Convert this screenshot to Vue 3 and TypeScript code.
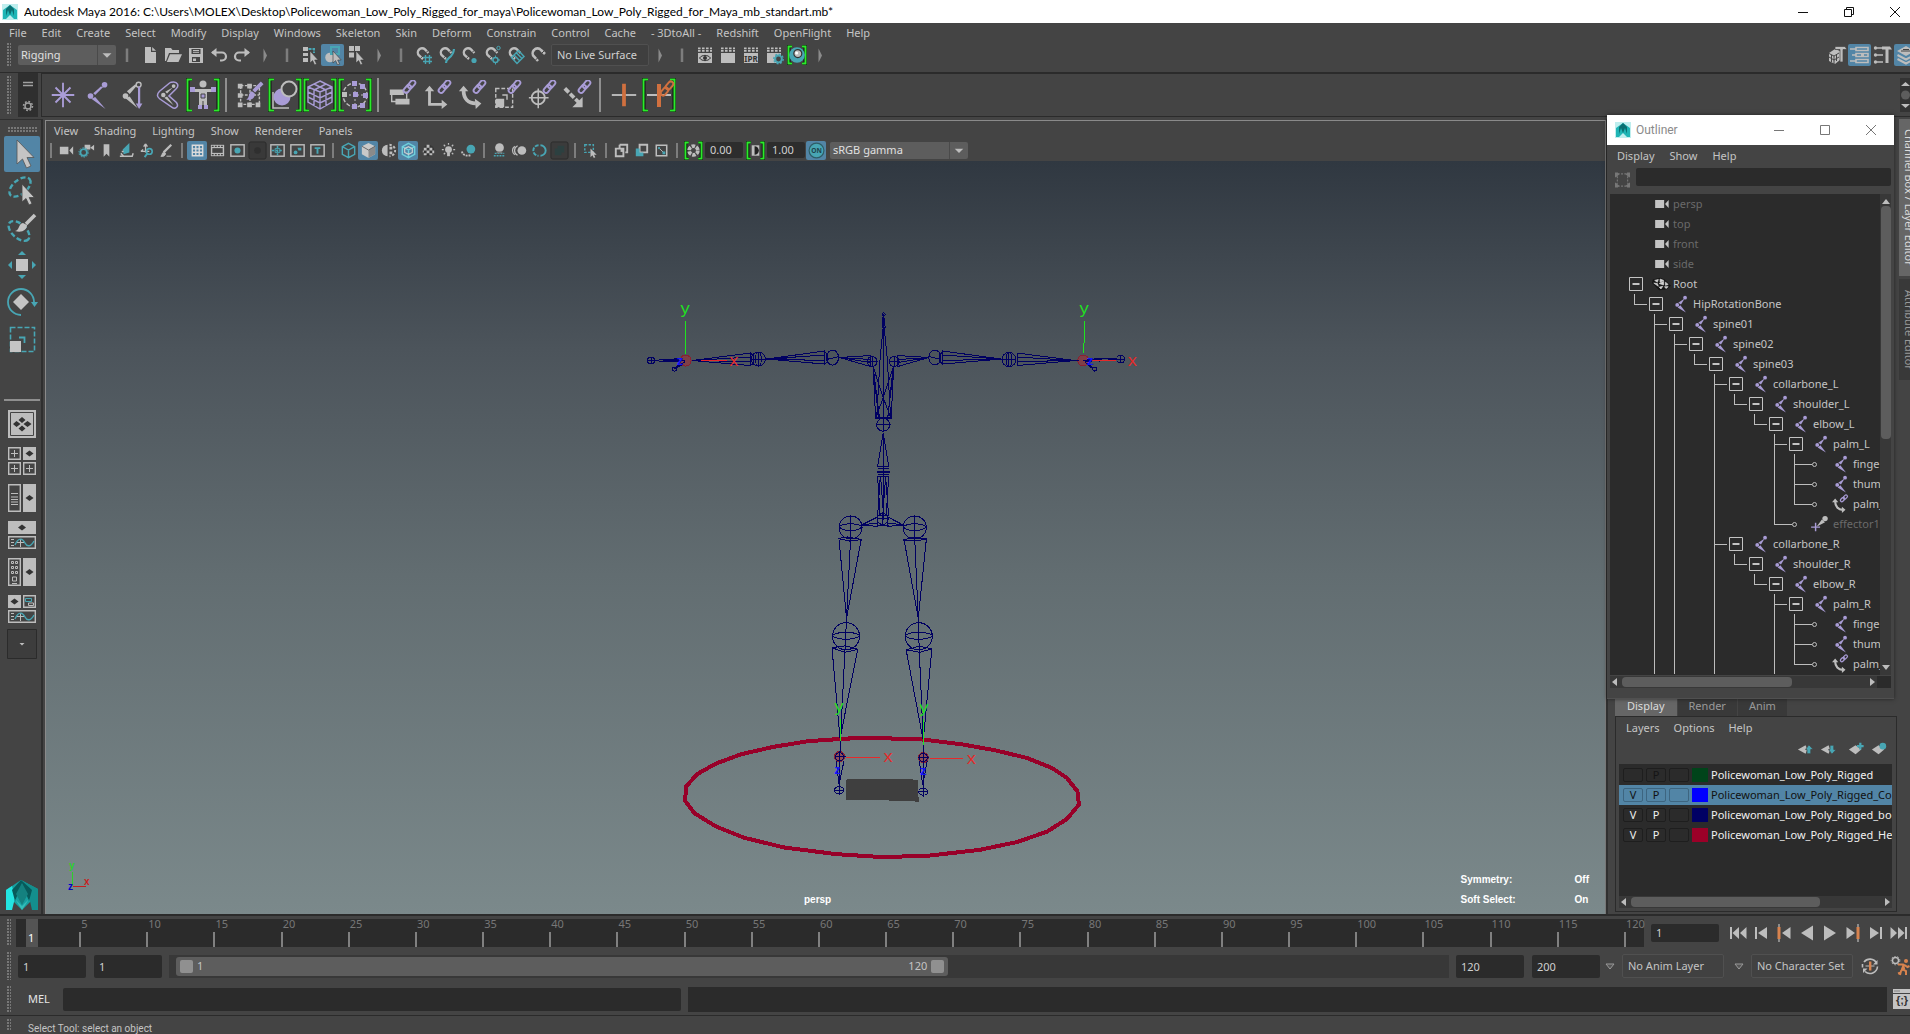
<script setup lang="ts">
import { ref } from 'vue'

const G = '#bdbdbd'
const T = '#48a6b4'
const P = '#a99cd6'
const O = '#d0703f'
const D = '#333333'

const cursor = `<path d="M10 6V18L12.6 15.6L14.6 20L16.6 19.1L14.7 15H18.2Z" fill="${G}" stroke="#3a3a3a" stroke-width=".6"/>`
const magnet = `<path d="M9 14L5 10.4A4.2 4.2 0 0 1 5 4.6A4.2 4.2 0 0 1 11 4.4L14.4 8" fill="none" stroke="${G}" stroke-width="2.4"/><path d="M6.400 13.400l2.600-2.600M12 7.600l2.200-2.200" stroke="#444" stroke-width="1"/>`
const clapper = `<path d="M3 8h14v10H3z" fill="${G}"/><path d="M3 3.4h14M3 5.9h14" stroke="${G}" stroke-width="1.6" stroke-dasharray="2.6 1.4"/>`
const chain = `<g fill="none" stroke="${P}" stroke-width="2"><rect x="17" y="7" width="9.500" height="5.200" rx="2.600" transform="rotate(-50 21.700 9.600)"/><rect x="21.500" y="2" width="9.500" height="5.200" rx="2.600" transform="rotate(-50 26.200 4.600)"/></g>`
const brace = (w: number, h: number, c = 5) =>
  `<path d="M${c} 1H1.500V${h - 1}H${c}M${w - c} 1H${w - 1.5}V${h - 1}H${w - c}" fill="none" stroke="#111" stroke-width="4"/><path d="M${c} 1.500H1.500V${h - 1.5}H${c}M${w - c} 1.500H${w - 1.5}V${h - 1.5}H${w - c}" fill="none" stroke="#2bea2b" stroke-width="2"/>`
const frame = `<rect x="3" y="4" width="14" height="12" fill="none" stroke="${G}" stroke-width="1.500"/>`
const cube = (c: string) =>
  `<path d="M10 2.500L16.500 6V14L10 17.500L3.500 14V6ZM3.500 6L10 9.500L16.500 6M10 9.500V17.500" fill="none" stroke="${c}" stroke-width="1.500"/>`
const bone = `<circle cx="14.500" cy="3" r="2.100" fill="${P}"/><path d="M14 4L10 10.500L7 8.500Z" fill="${P}"/><circle cx="5.800" cy="11" r="2.100" fill="${P}"/><path d="M6.300 14L9.300 11.300L15.500 19.500Z" fill="${P}"/>`

const icons: Record<string, string> = {
  new: `<path d="M5 2h6v5h5v11H5z" fill="${G}"/><path d="M12.200 2L16 5.800H12.200Z" fill="${G}"/>`,
  open: `<path d="M2 3h6l1.500 2H16v3H6L3 16H2Z" fill="${G}"/><path d="M7 9.200h12L15.500 17H3.800Z" fill="${G}"/>`,
  save: `<path d="M3 3h14v15H3z" fill="${G}"/><path d="M5.500 4h9v5h-9zM6 12h8v5H6z" fill="#444"/><path d="M7 5.500h6M7 7.300h6" stroke="${G}"/><path d="M7 13.500h3v2.500H7z" fill="${G}"/>`,
  undo: `<path d="M3 7.500H13a3.800 3.800 0 0 1 0 8H11" fill="none" stroke="${G}" stroke-width="2.200"/><path d="M7.500 3L2 7.500l5.500 4.500z" fill="${G}"/>`,
  redo: `<path d="M17 7.500H7a3.800 3.800 0 0 0 0 8H9" fill="none" stroke="${G}" stroke-width="2.200"/><path d="M12.500 3L18 7.500l-5.500 4.500z" fill="${G}"/>`,
  chev: `<path d="M8.500 3.500L12 10.500L8.500 17.500Z" fill="#8b8b8b"/>`,
  bar: `<path d="M10 3.500V17" stroke="#7d7d7d" stroke-width="2.500"/>`,
  selH: `<path d="M3 2h5v4H3zM3 8h5v3H3zM3 13h5v4H3z" fill="${G}"/><path d="M8.500 4H14V8" fill="none" stroke="${T}" stroke-width="2" stroke-dasharray="3 1"/>${cursor}`,
  selO: `<circle cx="7" cy="12.500" r="4.800" fill="${G}"/><path d="M8 2h8v7H8z" fill="none" stroke="${T}" stroke-width="2"/>${cursor}`,
  selC: `<path d="M3 1h5v5H3zM9 1h5v5H9zM3 7.500h5v5H3z" fill="${G}"/>${cursor}`,
  magGrid: magnet + `<path d="M11.500 10V19M15.500 10V19M9 12.500H18M9 16.500H18" stroke="${T}" stroke-width="1.400"/>`,
  magCurve: magnet + `<path d="M9 18C9 12 16 14 17 4" fill="none" stroke="${T}" stroke-width="2.200"/>`,
  magPoint: magnet + `<circle cx="14" cy="15.500" r="2.600" fill="${T}"/>`,
  magCenter: magnet + `<circle cx="15.500" cy="3" r="1.700" fill="none" stroke="${T}"/><circle cx="12.500" cy="15" r="2.500" fill="none" stroke="${T}" stroke-width="1.400"/><path d="M12.500 10.500v2M12.500 17.500v2M8 15h2M15 15h2" stroke="${T}"/>`,
  magPlane: magnet + `<path d="M5.500 12.500L12.500 5.500L18 11.500L11 18.500ZM8 10L14 16M10.500 8L16 13.500" fill="none" stroke="${T}" stroke-width="1.500"/>`,
  magLive: `<path d="M9 16L5 11.500A4.600 4.600 0 0 1 5 5A4.600 4.600 0 0 1 12 5L16 9" fill="none" stroke="${G}" stroke-width="2.600"/><path d="M6.500 15l3-3M12.500 8.500l2.600-2.600" stroke="#444"/>`,
  rView: clapper + `<path d="M4.500 13C7 9.500 13 9.500 15.500 13C13 16.500 7 16.500 4.500 13Z" fill="${G}" stroke="${D}"/><circle cx="10" cy="13" r="2" fill="${D}"/>`,
  render: clapper,
  ipr: clapper + `<text x="10" y="16.500" font-size="8" font-weight="700" text-anchor="middle" fill="#333">IPR</text>`,
  rSet: clapper + `<circle cx="14.500" cy="14" r="3.400" fill="#444" stroke="${T}" stroke-width="2"/><circle cx="14.500" cy="14" r="4.800" fill="none" stroke="${T}" stroke-width="1.200" stroke-dasharray="2 1.700"/>`,
  hyper: brace(20, 20) + `<circle cx="10" cy="10" r="7.800" fill="${T}"/><circle cx="10.800" cy="8.600" r="4" fill="${G}" stroke="#333" stroke-width="1.200"/><circle cx="9.600" cy="8" r="1.500" fill="#fff"/>`,
  toolA: `<path d="M2 8l6-4 5 2v9l-5 4-6-3z" fill="${G}"/><path d="M2 8.500l5 2.500v8M7 11l5-3M2 12l5 3 5-3M4.500 10v7M9.500 9v7" stroke="#444" fill="none"/><path d="M8 1.500h10l2 3h-4V17h-3V4.500H8z" fill="${G}" stroke="#444" stroke-width=".7"/>`,
  toolB: `<g fill="none" stroke="${G}" stroke-width="1.600"><path d="M6 2.500h12v3H6zM6 8.500h12v3H6zM6 14.500h12v3H6z"/><path d="M0 4h6M2 10h4M0 16h6"/></g><path d="M11 9h3v2h-3z" fill="${G}"/>`,
  toolC: `<circle cx="2.500" cy="3" r="1.700" fill="${G}"/><circle cx="2.500" cy="10" r="1.700" fill="${G}"/><circle cx="2.500" cy="17" r="1.700" fill="${G}"/><path d="M4 3h5M4 10h6M4 17h6" stroke="${G}" stroke-width="1.400"/><path d="M9 1.500h8l2 3h-3.500V18h-3V4.500H9z" fill="${G}"/>`,
  toolD: `<path d="M10 1l9 5-9 5-9-5z" fill="${G}"/><path d="M1.500 10L10 14.500 18.500 10M1.500 14L10 18.500 18.500 14" fill="none" stroke="${G}" stroke-width="2"/><path d="M5 6h10M7 4.500h6" stroke="#444"/>`,
  // panel toolbar
  cam: `<path d="M3 6h9v8H3zM13 10L17 5.500V14.500Z" fill="${G}"/>`,
  camSet: `<path d="M8 4h6v5H8zM14 7L18 4V10Z" fill="${G}"/><circle cx="7" cy="12" r="3.500" fill="none" stroke="${T}" stroke-width="2"/><circle cx="7" cy="12" r="5" fill="none" stroke="${T}" stroke-dasharray="1.500 1.600"/>`,
  mark: `<path d="M7 3.500h6V16.500L10 13.500 7 16.500z" fill="${G}"/>`,
  plane: `<path d="M6 9L13 2V12L7 14Z" fill="${T}"/><path d="M4 13l3 3h9l1-3M5 11h2M3 16h8" stroke="${G}" stroke-width="1.600" fill="none"/>`,
  pan: `<path d="M9 3v9M4 11h9M9 3L7 6M9 3l2 3M4 11l2.500-2" stroke="${G}" stroke-width="1.400" fill="none"/><circle cx="13" cy="11" r="3" fill="none" stroke="${T}" stroke-width="1.700"/><path d="M11 13l-3 4" stroke="${T}" stroke-width="2"/>`,
  pencil: `<path d="M15 4L7 12" stroke="${G}" stroke-width="2.400"/><path d="M4 16c3 1 5-1 5-3L7 12c-2 0-1 3-3 4zM10 16h5" fill="${G}" stroke="${G}"/>`,
  grid: `<path d="M4.500 4.500h11v11h-11zM8.200 4v12M11.800 4v12M4 8.200h12M4 11.800h12" fill="none" stroke="#dcdcdc" stroke-width="1.400"/>`,
  film: `<path d="M3 4h14v12H3z" fill="${G}"/><path d="M4.500 7.500h11v5h-11z" fill="#444"/><path d="M4 5.600h12M4 14.400h12" stroke="#444" stroke-width="1.400" stroke-dasharray="2 1.200"/>`,
  res: frame + `<circle cx="10" cy="10" r="3.200" fill="${T}"/>`,
  gate: `<rect x="1" y="1" width="18" height="18" rx="2" fill="#393939" stroke="#2b2b2b"/><circle cx="10" cy="10" r="3.500" fill="#2f2f2f"/>`,
  field: frame + `<path d="M10 5v10M4 10h12" stroke="${T}" stroke-width="1.600" stroke-dasharray="2.500 1.500"/><path d="M7.500 8h5v4h-5z" fill="none" stroke="${T}"/>`,
  safe: frame + `<circle cx="8" cy="12" r="2" fill="${T}"/><path d="M10 7h4v3h-3z" fill="${T}"/>`,
  title: frame + `<path d="M7 7.500h6M10 7v6.500" stroke="${T}" stroke-width="2"/>`,
  cubeW: cube(T),
  cubeS: `<path d="M10 2L17 5.500V14L10 18L3 14V5.500Z" fill="#c9c9c9"/><path d="M10 9.500V18L17 14V5.500Z" fill="#8a8a8a"/><path d="M3 5.500L10 9.500L17 5.500" fill="none" stroke="#666"/>`,
  half: `<path d="M9 4a6 6 0 0 0 0 12z" fill="${G}"/><path d="M11 4a6 6 0 0 1 0 12" fill="none" stroke="${G}" stroke-width="2" stroke-dasharray="2.500 1.800"/><path d="M11 6h3v3h-3zM11 11h3v3h-3z" fill="${G}"/>`,
  cubeT: cube('#6fd0dc') + `<path d="M10 6l4 2v4l-4 2-4-2V8z" fill="none" stroke="#d0d0d0" stroke-width="1.200"/>`,
  check: `<circle cx="10" cy="10" r="6" fill="#353535"/><path d="M8 4h3v3H8zM5 7h3v3H5zM11 7h3v3h-3zM8 10h3v3H8zM14 10h2v3h-2zM5 13h3v2H5zM11 13h3v2h-3zM4 10h1v2H4z" fill="${G}"/>`,
  bulb: `<circle cx="10" cy="9" r="3.600" fill="${G}"/><path d="M8.500 12h3v4h-3z" fill="${G}"/><path d="M10 2v2M3 9h2M15 9h2M5 4l1.500 1.500M15 4l-1.500 1.500M5 14l1.500-1.500M15 14l-1.500-1.500" stroke="${G}" stroke-width="1.300"/>`,
  shadow: `<circle cx="12.500" cy="8.500" r="4.600" fill="${T}"/><path d="M3 11c1 4 5 5 9 4" fill="none" stroke="${G}" stroke-width="2" stroke-dasharray="2 1"/>`,
  ao: `<circle cx="10" cy="7" r="4.600" fill="${G}"/><path d="M5 13h10M4 15.500h12" stroke="${T}" stroke-width="1.500" stroke-dasharray="2 1"/><path d="M7 12h6" stroke="#777" stroke-width="2"/>`,
  blur: `<circle cx="12.500" cy="10" r="4.600" fill="${G}"/><path d="M8 5a5.500 5.500 0 0 0 0 10M5 5.500a5.500 5.500 0 0 0 0 9" fill="none" stroke="${G}" stroke-width="1.300"/>`,
  ring: `<path d="M9 4.500a5.500 5.500 0 0 0 0 11" fill="none" stroke="${T}" stroke-width="2" stroke-dasharray="4 1.200"/><path d="M11 4.500a5.500 5.500 0 0 1 0 11" fill="none" stroke="${T}" stroke-width="2"/>`,
  depth: `<rect x="1" y="1" width="18" height="18" rx="2" fill="#3b3b3b" stroke="#2b2b2b"/><path d="M8 5h7v7h-3v3H5V8h3z" fill="#2c4040"/>`,
  iso: `<path d="M4 4h9v8H4z" fill="none" stroke="${T}" stroke-width="1.500" stroke-dasharray="2.500 1.500"/><path d="M10 8v9l2-2 1.500 3 1.600-.8L13.700 14.500H16.500Z" fill="${G}"/>`,
  lay1: `<path d="M8 4h8v8h-2M8 4v4" fill="none" stroke="${G}" stroke-width="2"/><path d="M4 8h8v8H4z" fill="none" stroke="${G}" stroke-width="2"/><path d="M9 8.500h3v3H9z" fill="${G}"/>`,
  lay2: `<path d="M8 4h8v8H8z" fill="none" stroke="${G}" stroke-width="2"/><path d="M4 8h4v4h4v4H4z" fill="${T}"/>`,
  lay3: `<path d="M4.500 4.500h11v11h-11z" fill="none" stroke="${G}" stroke-width="1.600"/><path d="M7 7l5 5" stroke="${G}"/><path d="M11 11h3v3h-3z" fill="${T}"/><circle cx="7.500" cy="7.500" r="1.200" fill="${T}"/>`,
  aperture: brace(20, 20) + `<circle cx="10" cy="10" r="4.600" fill="none" stroke="${G}" stroke-width="4" stroke-dasharray="3.600 1.200"/>`,
  contrast: brace(20, 20) + `<path d="M6 4.500h8v11H6z" fill="${G}"/><path d="M9 5.500a4.500 4.500 0 0 1 0 9z" fill="#222"/>`,
  on: `<circle cx="10" cy="10" r="7.800" fill="${T}" stroke="#2e5d66" stroke-width="1.200"/><text x="10" y="12.600" font-size="7" font-weight="700" text-anchor="middle" fill="#20444c">ON</text>`,
  // shelf
  locator: `<path d="M16 3V29M4 16H28M8 8L24 24M24 8L8 24" stroke="${P}" stroke-width="2"/>`,
  joint: `<circle cx="23" cy="5" r="3" fill="${P}"/><path d="M21.500 7.500L13 16l-2-2 8-7z" fill="${P}"/><circle cx="8" cy="17" r="3" fill="${P}"/><path d="M9 20l4-2 11 13z" fill="${P}"/>`,
  ik: `<path d="M20 6L12.500 15L9.500 12L18.500 4.500zM8 19.500l4.500-2L21 30z" fill="${G}"/><circle cx="22" cy="5" r="2.600" fill="none" stroke="${G}" stroke-width="1.500"/><circle cx="8" cy="17" r="3" fill="${G}"/><path d="M22.500 7V28" stroke="${P}" stroke-width="2.400"/><path d="M19 25h7l-3.500 6z" fill="${P}"/>`,
  skin: `<path d="M22 2c4 0 6 4 3 7l-8 8 8 7c3 4-1 8-5 5L7 20c-3-2-3-5 0-8L18 3c1-1 2-1 4-1z" fill="none" stroke="${P}" stroke-width="1.600"/><circle cx="22" cy="6.500" r="2" fill="${G}"/><circle cx="11" cy="16" r="2.400" fill="${G}"/><path d="M21 8L15 14.500L13 12.500zM12 19l3-1.500L22 27z" fill="${G}"/>`,
  human: brace(34, 34, 6) + `<circle cx="17" cy="6" r="3.500" fill="${G}"/><path d="M7 11h20v3h-6v9h-8v-9H7zM13 23h3.500v4H13zM17.500 23H21v4h-3.500z" fill="${G}"/><path d="M4 9h5v5H4zM25 9h5v5h-5zM12 27h4v4h-4zM18 27h4v4h-4z" fill="${P}"/><path d="M15 16h4v4h-4z" fill="${P}" stroke="#444"/>`,
  weights: `<path d="M6 6h20v20H6zM6 16h20M16 6v20" fill="none" stroke="${G}" stroke-width="1.500" stroke-dasharray="3 1.500"/><path d="M3 4h5v5H3zM3 14h5v5H3zM3 24h5v5H3zM13 4h5v5h-5zM13 24h5v5h-5zM22 24h5v5h-5z" fill="${G}"/><path d="M29 3L20 12" stroke="${P}" stroke-width="4"/><path d="M12 21c5 1 10-2 9-7l-3-2c-4 1-2 7-6 9z" fill="${P}"/>`,
  cluster: brace(34, 34, 6) + `<path d="M5 14v16h16" fill="none" stroke="${G}" stroke-width="1.500"/><circle cx="14" cy="19" r="8.500" fill="${P}"/><circle cx="21" cy="11" r="7.500" fill="#444" stroke="${G}" stroke-width="2"/>`,
  lattice: brace(34, 34, 6) + `<path d="M17 3L29 9V24L17 31L5 24V9ZM5 9L17 14L29 9M17 14V31M5 14l12 6 12-6M5 19l12 6 12-6M11 6l12 6v16M23 6L11 12v16" fill="none" stroke="${P}" stroke-width="1.400"/>`,
  nonlin: brace(34, 34, 6) + `<circle cx="17" cy="17" r="12" fill="none" stroke="${G}" stroke-width="1.500" stroke-dasharray="4 2"/><path d="M17 5v24M7 17h20" stroke="${G}" stroke-dasharray="2 2"/><path d="M14 3h5v5h-5zM15 14h5v5h-5zM14 26h5v5h-5zM22 6h5v5h-5zM25 15h5v5h-5zM22 25h5v5h-5z" fill="${P}"/><path d="M4 14h5v5H4z" fill="${G}"/>`,
  cParent: `<path d="M3 10h15v6H3zM9 20h15v6H9z" fill="${G}"/><path d="M5 16v7h5M18 13h3v7" fill="none" stroke="${G}" stroke-width="1.500"/>${chain}`,
  cPoint: `<path d="M8 11V26H22" fill="none" stroke="${G}" stroke-width="3"/><path d="M3 12l5-6 5 6zM21 21l6 5-6 5z" fill="${G}"/>${chain}`,
  cOrient: `<path d="M7 11C7 20 12 25 20 25" fill="none" stroke="${G}" stroke-width="4"/><path d="M2 12l5-6 5 6zM19 20l7 5-6 6z" fill="${G}"/>${chain}`,
  cScale: `<path d="M4 9h18v20H4z" fill="none" stroke="${G}" stroke-width="1.500" stroke-dasharray="4 2"/><path d="M4 20h9v9H4z" fill="${G}"/><path d="M11 16h5v5" fill="none" stroke="${G}" stroke-width="1.500"/>${chain}`,
  cAim: `<circle cx="12" cy="19" r="7" fill="none" stroke="${G}" stroke-width="2"/><path d="M12 9V30M2 19H23" stroke="${G}" stroke-width="1.600"/>${chain}`,
  cPole: `<path d="M3 9L18 24" stroke="${G}" stroke-width="4" stroke-dasharray="6 2"/><path d="M22 18v11H11z" fill="${G}"/>${chain}`,
  key: `<path d="M3 16H29" stroke="${G}" stroke-width="2"/><path d="M14 4h4v24h-4z" fill="${O}"/>`,
  keyLink: brace(34, 34, 6) + `<path d="M5 17H29" stroke="${G}" stroke-width="2"/><path d="M15 6h4v23h-4z" fill="${O}"/><g fill="none" stroke="${O}" stroke-width="2"><rect x="18" y="11" width="9" height="5" rx="2.500" transform="rotate(-50 22.500 13.500)"/><rect x="23" y="5" width="9" height="5" rx="2.500" transform="rotate(-50 27.500 7.500)"/></g>`,
  // toolbox, 36 x 36
  tSelect: `<path d="M13 4V28L18.500 23L22.500 32L27 30L23 21.500H30Z" fill="#c4c4c4" stroke="#555" stroke-width=".8"/>`,
  tLasso: `<ellipse cx="16" cy="14" rx="12.500" ry="7" transform="rotate(-40 16 14)" fill="none" stroke="${T}" stroke-width="2.400" stroke-dasharray="5 2.500"/><path d="M18 11V29L22 25.500L25 32L28 30.600L25.200 24.500H30.500Z" fill="#c4c4c4" stroke="#444" stroke-width=".8"/>`,
  tPaint: `<ellipse cx="15" cy="21" rx="12.500" ry="7" transform="rotate(42 15 21)" fill="none" stroke="${T}" stroke-width="2.400" stroke-dasharray="5 2.500"/><path d="M31 5L22 14" stroke="#c4c4c4" stroke-width="3.500"/><path d="M11 21c7 2 12-1 12-6l-4-2c-5 1-3 7-8 8z" fill="#c4c4c4"/>`,
  tMove: `<path d="M12 12h12v12H12z" fill="#c4c4c4"/><path d="M14 8l4-4 4 4zM14 28l4 4 4-4zM8 14l-4 4 4 4zM28 14l4 4-4 4z" fill="${T}"/>`,
  tRotate: `<path d="M30 18A13 13 0 1 0 17 31" fill="none" stroke="${T}" stroke-width="1.800"/><path d="M27 18h7l-3.500 5z" fill="${T}"/><path d="M17 10l8 8-8 8-8-8z" fill="#c4c4c4"/>`,
  tScale: `<path d="M6.500 6.500h24v24h-24z" fill="none" stroke="${T}" stroke-width="1.600" stroke-dasharray="5 2"/><path d="M6 20h11v11H6z" fill="#c4c4c4"/><path d="M15 16.500h5.500V22" fill="none" stroke="${T}" stroke-width="1.800"/>`,
  // layouts, 28 x 28
  l1: `<path d="M0 0h28v28H0z" fill="${G}"/><path d="M2.500 2.500h23v23h-23z" fill="none" stroke="#444"/><path d="M14 7l3.500 3L14 13l-3.500-3zM8.500 11l4 3-4 3L5 14zM19.500 11l4 3-4 3-4-3zM14 15.500l3.500 3-3.500 3-3.500-3z" fill="#333"/>`,
  l2: `<path d="M.7.700h11.600v11.600H.7zM.7 15.700h11.600v11.600H.7zM15.700 15.700h11.600v11.600H15.700z" fill="none" stroke="${G}" stroke-width="1.400"/><path d="M6.500 3v7M3 6.500h7M6.500 18v7M3 21.500h7M21.500 18v7M18 21.500h7" stroke="${G}"/><path d="M15 0h13v13H15z" fill="${G}"/><path d="M21.500 3.500l4 3-4 3-4-3z" fill="#333"/>`,
  l3: `<path d="M.7.700h11.600v26.600H.7z" fill="none" stroke="${G}" stroke-width="1.400"/><path d="M3 9.500h7M3 13h7M3 15.500h7M3 18h7M3 20.500h7" stroke="${G}"/><path d="M15 0h13v28H15z" fill="${G}"/><path d="M21.500 11l4 3-4 3-4-3z" fill="#333"/>`,
  l4: `<path d="M0 0h28v13H0z" fill="${G}"/><path d="M14 3.500l4 3-4 3-4-3z" fill="#333"/><path d="M.7 15.700h26.600v11.600H.7z" fill="none" stroke="${G}" stroke-width="1.400"/><path d="M3 18.500h3M3 21.500h3M3 24.500h3M12.500 18v8M9 21.500h7" stroke="${G}"/><path d="M7 24c4-9 8-6 10-2s6 4 9-2" fill="none" stroke="${T}" stroke-width="1.400"/>`,
  l5: `<path d="M.7.700h11.600v26.600H.7z" fill="none" stroke="${G}" stroke-width="1.400"/><path d="M3.500 3.500h2v2h-2zM7.500 3.500h2v2h-2zM3.500 8.500h2v2h-2zM7.500 8.500h2v2h-2zM3.500 13.500h2v2h-2zM7.500 13.500h2v2h-2zM4.500 19h4v4h-4zM4 25.500h5" fill="none" stroke="${G}"/><path d="M15 0h13v28H15z" fill="${G}"/><path d="M21.500 11l4 3-4 3-4-3z" fill="#333"/>`,
  l6: `<path d="M0 0h13v13H0z" fill="${G}"/><path d="M6.500 3.500l4 3-4 3-4-3z" fill="#333"/><path d="M15.700.700h11.600v11.600H15.700zM.7 15.700h26.600v11.600H.7z" fill="none" stroke="${G}" stroke-width="1.400"/><path d="M17.500 3.500h6v3h-6z" fill="none" stroke="${T}"/><path d="M20.500 8h5v2.500h-5z" fill="none" stroke="${G}"/><path d="M3 18.500h3M3 21.500h3M3 24.500h3M12.500 18v8M9 21.500h7" stroke="${G}"/><path d="M7 24c4-9 8-6 10-2s6 4 9-2" fill="none" stroke="${T}" stroke-width="1.400"/>`,
  l7: `<path d="M.5.500h29v29H.5z" fill="#3d3d3d" stroke="#2b2b2b"/><path d="M12.500 14h5l-2.500 2.500z" fill="${G}"/>`,
  // outliner
  camRow: `<path d="M3.500 5.500H13.500V14.500H3.500zM14.500 10L18.500 5.500V14.500Z" fill="#c4c4c4"/>`,
  mesh: `<path d="M1 5l8-2 5 2 7 7-5 4-8 1-8-8z" fill="#151515"/><path d="M3 6l4-1-1 3zM9 4.500l4 1.500-4 2zM2 9l4 .5 1 3zM8 9.500l5-2.500 0 4zM15 8l3 2.500-3 1zM8 13.500l4-1-2 3zM14 13l4 0-2.500 2z" fill="#d0d0d0" stroke="#d0d0d0" stroke-width=".8"/>`,
  bone,
  orientRow: `<path d="M3.500 7C3.500 13 7 16.500 12 16.500" fill="none" stroke="${G}" stroke-width="2.400"/><path d="M0 8l3.500-4 3.500 4zM11 13l4 3.500-4 3.500z" fill="${G}"/><rect x="9" y="3.500" width="5.500" height="3.200" rx="1.600" transform="rotate(-45 11.700 5.100)" fill="none" stroke="${P}" stroke-width="1.400"/><rect x="12" y=".8" width="5.500" height="3.200" rx="1.600" transform="rotate(-45 14.700 2.400)" fill="none" stroke="${P}" stroke-width="1.400"/>`,
  eff: `<circle cx="14.500" cy="4" r="3" fill="${G}"/><path d="M11 5L14.500 8 5 13z" fill="${G}"/><path d="M4 8.500V18M-1 13.500H9" stroke="${P}" stroke-width="1.600"/>`,
  // layer buttons
  lUp: `<path d="M1 10L9 5.500L11 10L9 14.500Z" fill="${G}"/><path d="M12.500 5L17 10h-2.500v4.500h-4V10H9z" fill="${T}" stroke="#444" stroke-width=".8"/>`,
  lDown: `<path d="M1 10L9 5.500L11 10L9 14.500Z" fill="${G}"/><path d="M12.500 15L17 10h-2.500V5.500h-4V10H9z" fill="${T}" stroke="#444" stroke-width=".8"/>`,
  lAdd: `<path d="M2 10L9 5.500L15 10L9 15Z" fill="${G}"/><path d="M14 3v7M10.500 6.500h7" stroke="${T}" stroke-width="2.400"/>`,
  lAddSel: `<path d="M2 10L9 5.500L15 10L9 15Z" fill="${G}"/><circle cx="13.500" cy="6.500" r="3.500" fill="${T}"/>`,
  // playback
  pStart: `<path d="M3 4v12" stroke="${G}" stroke-width="2"/><path d="M11 4v12L4.500 10zM18.500 4v12L12 10z" fill="${G}"/>`,
  pBack: `<path d="M5 4v12" stroke="${G}" stroke-width="2"/><path d="M16 4v12L7 10z" fill="${G}"/>`,
  pKeyB: `<path d="M5 1v18" stroke="${G}" stroke-width="1.200"/><path d="M3.500 4h3v12h-3z" fill="#d8834e"/><path d="M16.500 4v12L8 10z" fill="${G}"/>`,
  pPlayB: `<path d="M16 2.500v15L4 10z" fill="${G}"/>`,
  pPlay: `<path d="M4 2.500v15L16 10z" fill="${G}"/>`,
  pKeyF: `<path d="M15 1v18" stroke="${G}" stroke-width="1.200"/><path d="M13.500 4h3v12h-3z" fill="#d8834e"/><path d="M3.500 4v12L12 10z" fill="${G}"/>`,
  pFwd: `<path d="M15 4v12" stroke="${G}" stroke-width="2"/><path d="M4 4v12L13 10z" fill="${G}"/>`,
  pEnd: `<path d="M17 4v12" stroke="${G}" stroke-width="2"/><path d="M9 4v12L15.500 10zM1.500 4v12L8 10z" fill="${G}"/>`,
  autoKey: `<path d="M4 6a7.500 7.500 0 0 1 12.500 1M17.500 10.500A7.500 7.500 0 0 1 5 15.500M2.500 8v3.500" fill="none" stroke="${G}" stroke-width="1.600"/><path d="M17.500 4v4.500H13zM3 17v-4.500h4.500z" fill="${G}"/><path d="M5.500 10h9" stroke="${G}"/><path d="M9 5.500h2.400v9H9z" fill="#d8834e"/>`,
  prefs: `<circle cx="5.500" cy="4.500" r="3" fill="none" stroke="${G}" stroke-width="1.400"/><circle cx="5.500" cy="4.500" r="4.300" fill="none" stroke="${G}" stroke-dasharray="1.500 1.600"/><circle cx="16" cy="5" r="2" fill="#d8834e"/><path d="M8 8.500h5l1 4-3 2.500-1 4M14 8l-2 5 4 2v4M14.500 9l3 2 2-1M8 17.500l3-1" fill="none" stroke="#d8834e" stroke-width="2"/>`,
}

const fileMenus = ['File', 'Edit', 'Create', 'Select', 'Modify', 'Display', 'Windows', 'Skeleton', 'Skin', 'Deform', 'Constrain', 'Control', 'Cache', '- 3DtoAll -', 'Redshift', 'OpenFlight', 'Help']
const statusA = ['bar', 'new', 'open', 'save', 'undo', 'redo', 'chev', 'bar', 'selH', 'selO', 'selC', 'chev', 'bar', 'magGrid', 'magCurve', 'magPoint', 'magCenter', 'magPlane', 'magLive']
const statusB = ['chev', 'bar', 'rView', 'render', 'ipr', 'rSet', 'hyper', 'chev']
const statusC = ['toolA', 'toolB', 'toolC', 'toolD']
const shelf = [
  ['locator', 'joint', 'ik', 'skin', 'human'],
  ['weights', 'cluster', 'lattice', 'nonlin'],
  ['cParent', 'cPoint', 'cOrient', 'cScale', 'cAim', 'cPole'],
  ['key', 'keyLink'],
]
const panelMenus = ['View', 'Shading', 'Lighting', 'Show', 'Renderer', 'Panels']
const panelIcons = [
  ['cam', 'camSet', 'mark', 'plane', 'pan', 'pencil'],
  ['grid', 'film', 'res', 'gate', 'field', 'safe', 'title'],
  ['cubeW', 'cubeS', 'half', 'cubeT', 'check', 'bulb', 'shadow'],
  ['ao', 'blur', 'ring', 'depth'],
  ['iso'],
  ['lay1', 'lay2', 'lay3'],
]
const activeIcons = new Set(['selO', 'toolB', 'toolD', 'grid', 'cubeS', 'cubeT'])
const tools = ['tSelect', 'tLasso', 'tPaint', 'tMove', 'tRotate', 'tScale']
const layouts = ['l1', 'l2', 'l3', 'l4', 'l5', 'l6']
const playback = ['pStart', 'pBack', 'pKeyB', 'pPlayB', 'pPlay', 'pKeyF', 'pFwd', 'pEnd']
const wide = new Set(['human', 'cluster', 'lattice', 'nonlin', 'keyLink'])

interface Row { name: string; icon: string; guides: string; open?: boolean; dim?: boolean }
// guide letters: space = empty, | = through line, t = tee, l = last child
const rows: Row[] = [
  { name: 'persp', icon: 'camRow', guides: '', dim: true },
  { name: 'top', icon: 'camRow', guides: '', dim: true },
  { name: 'front', icon: 'camRow', guides: '', dim: true },
  { name: 'side', icon: 'camRow', guides: '', dim: true },
  { name: 'Root', icon: 'mesh', guides: '', open: true },
  { name: 'HipRotationBone', icon: 'bone', guides: 'l', open: true },
  { name: 'spine01', icon: 'bone', guides: ' t', open: true },
  { name: 'spine02', icon: 'bone', guides: ' |t', open: true },
  { name: 'spine03', icon: 'bone', guides: ' ||l', open: true },
  { name: 'collarbone_L', icon: 'bone', guides: ' || t', open: true },
  { name: 'shoulder_L', icon: 'bone', guides: ' || |l', open: true },
  { name: 'elbow_L', icon: 'bone', guides: ' || | l', open: true },
  { name: 'palm_L', icon: 'bone', guides: ' || |  t', open: true },
  { name: 'finge', icon: 'bone', guides: ' || |  |t' },
  { name: 'thum', icon: 'bone', guides: ' || |  |t' },
  { name: 'palm_', icon: 'orientRow', guides: ' || |  |l' },
  { name: 'effector1', icon: 'eff', guides: ' || |  l', dim: true },
  { name: 'collarbone_R', icon: 'bone', guides: ' || t', open: true },
  { name: 'shoulder_R', icon: 'bone', guides: ' || |l', open: true },
  { name: 'elbow_R', icon: 'bone', guides: ' || | l', open: true },
  { name: 'palm_R', icon: 'bone', guides: ' || |  t', open: true },
  { name: 'finge', icon: 'bone', guides: ' || |  |t' },
  { name: 'thum', icon: 'bone', guides: ' || |  |t' },
  { name: 'palm_', icon: 'orientRow', guides: ' || |  |l' },
]
const guidePath: Record<string, string> = {
  ' ': '',
  '|': 'M5.500 0V20',
  t: 'M5.500 0V20M5.500 10.500H18',
  l: 'M5.500 0V11M5.500 10.500H18',
}

const layers = [
  { v: '', p: 'P', color: '#00441a', name: 'Policewoman_Low_Poly_Rigged', off: true, sel: false },
  { v: 'V', p: 'P', color: '#0000ff', name: 'Policewoman_Low_Poly_Rigged_Co', off: false, sel: true },
  { v: 'V', p: 'P', color: '#000064', name: 'Policewoman_Low_Poly_Rigged_bo', off: false, sel: false },
  { v: 'V', p: 'P', color: '#9b0028', name: 'Policewoman_Low_Poly_Rigged_He', off: false, sel: false },
]
const frames = Array.from({ length: 24 }, (_, i) => (i + 1) * 5)

const menuSet = ref('Rigging')
const colorSpace = ref('sRGB gamma')
</script>

<template>
  <div class="app">
    <header class="titlebar">
      <svg class="logo" viewBox="0 0 16 16"><path d="M0 0h16v16H0z" fill="#bfeeee" /><path d="M1 15V6L8 1l7 5v9h-3l-4-4-4 4z" fill="#1fb5b5" /><path d="M4 12V5l4-4 4 4v7l-2-6-2 5-2-5z" fill="#0b6f72" /></svg>
      <span class="caption">Autodesk Maya 2016: C:\Users\MOLEX\Desktop\Policewoman_Low_Poly_Rigged_for_maya\Policewoman_Low_Poly_Rigged_for_Maya_mb_standart.mb*</span>
      <button class="win" aria-label="Minimize"><svg viewBox="0 0 12 12"><path d="M1 6.500h10" /></svg></button>
      <button class="win" aria-label="Restore"><svg viewBox="0 0 12 12"><path d="M1.500 3.500h7v7h-7zM3.500 3.500v-2h7v7h-2" /></svg></button>
      <button class="win" aria-label="Close"><svg viewBox="0 0 12 12"><path d="M1 1l10 10M11 1L1 11" /></svg></button>
    </header>

    <nav class="menubar"><a v-for="m in fileMenus" :key="m" href="#">{{ m }}</a></nav>

    <div class="status">
      <i class="grip"></i>
      <div class="combo menuset">
        <select v-model="menuSet" aria-label="Menu set"><option>Rigging</option></select>
        <svg viewBox="0 0 20 20"><path d="M5 8h10l-5 5z" fill="#bdbdbd" /></svg>
      </div>
      <button v-for="(n, i) in statusA" :key="i" class="cell" :class="{ on: activeIcons.has(n), slim: n === 'bar' }" :aria-label="n"><svg viewBox="0 0 20 20" v-html="icons[n]"></svg></button>
      <input class="live" value="No Live Surface" aria-label="Live surface" />
      <button v-for="(n, i) in statusB" :key="'b' + i" class="cell" :class="{ slim: n === 'bar' }" :aria-label="n"><svg viewBox="0 0 20 20" v-html="icons[n]"></svg></button>
      <div class="right">
        <button v-for="n in statusC" :key="n" class="cell" :class="{ on: activeIcons.has(n) }" :aria-label="n"><svg viewBox="0 0 20 20" v-html="icons[n]"></svg></button>
      </div>
    </div>

    <div class="shelfrow">
      <i class="grip"></i>
      <div class="shelfside">
        <svg viewBox="0 0 12 12"><path d="M1 4.500h10M1 7.500h10" stroke="#a0a0a0" stroke-width="1.500" /></svg>
        <svg viewBox="0 0 12 12"><circle cx="6" cy="6" r="3" fill="none" stroke="#a0a0a0" stroke-width="1.500" /><circle cx="6" cy="6" r="4.500" fill="none" stroke="#a0a0a0" stroke-width="1.500" stroke-dasharray="1.800 1.700" /></svg>
      </div>
      <div class="shelf">
        <div v-for="(g, gi) in shelf" :key="gi" class="group">
          <button v-for="n in g" :key="n" :class="{ wide: wide.has(n) }" :aria-label="n"><svg :viewBox="wide.has(n) ? '0 0 34 34' : '0 0 32 32'" v-html="icons[n]"></svg></button>
        </div>
        <svg class="shelfscroll" viewBox="0 0 12 34"><path d="M0 0h12v34H0z" fill="#333" /><path d="M1 8h9L5.500 4zM1 26h9L5.500 30z" fill="#bdbdbd" /><circle cx="5.500" cy="17" r="4.500" fill="#5d5d5d" /></svg>
      </div>
    </div>

    <main class="main">
      <aside class="toolbox">
        <i class="hgrip"></i>
        <button v-for="(n, i) in tools" :key="n" class="tool" :class="{ on: i === 0 }" :aria-label="n"><svg viewBox="0 0 36 36" v-html="icons[n]"></svg></button>
        <hr />
        <button v-for="n in layouts" :key="n" class="lay" :aria-label="n"><svg viewBox="0 0 28 28" v-html="icons[n]"></svg></button>
        <button class="more" aria-label="More layouts"><svg viewBox="0 0 30 30" v-html="icons.l7"></svg></button>
        <svg class="maya" viewBox="0 0 32 30"><path d="M0 10L15 0 L32 9V30H26V20L16 30L6 20V30H0Z" fill="#17a0a0" /><path d="M0 10L6 6L9 18L6 30H0Z" fill="#24e5e2" /><path d="M15 0L32 9V30H26L22 12Z" fill="#138f8d" /><path d="M6 10L15 0L26 10L23 21L16 4L9 21Z" fill="#075a5a" /><path d="M16 3L22 14L16 25L10 14Z" fill="#14817f" /><path d="M9 19L16 26L23 19L16 30Z" fill="#35bdb8" /></svg>
      </aside>

      <section class="panel">
        <nav class="panelmenu"><a v-for="m in panelMenus" :key="m" href="#">{{ m }}</a></nav>
        <div class="paneltools">
          <template v-for="(g, gi) in panelIcons" :key="gi">
            <i class="sep"></i>
            <button v-for="n in g" :key="n" :class="{ on: activeIcons.has(n) }" :aria-label="n"><svg viewBox="0 0 20 20" v-html="icons[n]"></svg></button>
          </template>
          <i class="sep"></i>
          <button class="b22" aria-label="Exposure"><svg viewBox="0 0 20 20" v-html="icons.aperture"></svg></button>
          <input value="0.00" aria-label="Exposure value" />
          <button class="b22" aria-label="Gamma"><svg viewBox="0 0 20 20" v-html="icons.contrast"></svg></button>
          <input value="1.00" aria-label="Gamma value" />
          <button class="on" aria-label="Colour management"><svg viewBox="0 0 20 20" v-html="icons.on"></svg></button>
          <div class="combo space">
            <select v-model="colorSpace" aria-label="View transform"><option>sRGB gamma</option></select>
            <svg viewBox="0 0 20 20"><path d="M5 8h10l-5 5z" fill="#bdbdbd" /></svg>
          </div>
        </div>
        <div class="canvas">
          <svg class="scene" viewBox="46 162 1560 751" preserveAspectRatio="xMidYMid slice">
            <path d="M687 785.700L698.300 773.300L716.700 763L741.700 753.700L774 746.300L808.300 740.700L846.700 738L883.300 737.700L923.300 739L963.300 744L995 749.700L1026.700 757.300L1051.700 767.300L1066.700 777.300L1077.300 790.700L1078.700 804L1066.700 818.300L1046.700 831L1016.700 841.300L980 849L930 854.700L883.300 856.300L836.700 853.300L785 846.700L745 837L716.700 825.700L695 812.300L686 800Z" fill="none" stroke="#980029" stroke-width="4" />
            <path d="M847 778H908L918 779.500L919 801L899 800L846 799Z" fill="#3f3f3f" />
            <g class="red">
              <circle cx="686.500" cy="361" r="5.500" /><circle cx="1083" cy="361" r="5.500" />
              <circle cx="840" cy="756" r="5" /><circle cx="923.500" cy="757" r="5" />
            </g>
            <g class="bones">
              <circle cx="652" cy="361" r="3.500" /><circle cx="675.500" cy="369.500" r="2" />
              <path d="M649 361H655M652 358V364M656 361L668 359.500L686 361L668 362.500ZM677 368L686 362M664 361H686" />
              <path d="M664 361L680 359.500M675 369L684 364" stroke-width="2" />
              <path d="M693 361L751 353.500V366ZM693 361L751 357.500M693 361L751 362M751 353.500L754 356V364L751 366" />
              <circle cx="759" cy="359.500" r="7" /><ellipse cx="759" cy="359.500" rx="3" ry="7" /><path d="M752 359.500H766M759 352V367" />
              <path d="M767 359.500L825 351.500V364.500ZM767 359.500L825 355.500M767 359.500L825 361M788 358.500L770 359.500M825 352L828 355V362L825 364.500" />
              <ellipse cx="833" cy="358" rx="6" ry="7.500" /><path d="M827 360L839 357" />
              <path d="M840 358L871 356V367ZM840 358L871 360M840 358L871 363" /><circle cx="872.500" cy="362" r="5" /><path d="M867 362H878M872.500 357V367" />

              <circle cx="1120.500" cy="359.500" r="4" /><circle cx="1094.500" cy="369.500" r="2" />
              <path d="M1117 359.500H1124M1120.500 356V363M1083 361L1100 358.500L1116 359.500L1100 361.500ZM1085 363L1093 369" />
              <path d="M1085 362L1102 359.500M1087 364L1093 369" stroke-width="2" />
              <path d="M1075 361L1017 353.500V366ZM1075 361L1017 357.500M1075 361L1017 362M1060 361H1079" />
              <circle cx="1009" cy="360" r="7" /><ellipse cx="1009" cy="360" rx="3" ry="7" /><path d="M1002 360H1016M1009 352.500V367.500" />
              <path d="M1001 359.500L943 351.500V364.500ZM1001 359.500L943 355.500M1001 359.500L943 361M943 352L940 355V362L943 364.500" />
              <ellipse cx="935" cy="358" rx="6" ry="7.500" /><path d="M929 357L941 360" />
              <path d="M929 358L898 356V367ZM929 358L898 360M929 358L898 363" /><circle cx="894.500" cy="362" r="5" /><path d="M889 362H900M894.500 357V367" />

              <circle cx="884" cy="315" r="1.500" /><path d="M884 315V420M882.500 320L884 316L885.500 328L882.500 328ZM883.500 328L880.500 358L877 419M884.500 328L887.500 358L891 419" />
              <path d="M873.500 367L876 419H891.500L894 367M873.500 367L883.500 398L894 367M873.500 367L880 419M894 367L888 419M883.500 398V419M876 419L883.500 398L891.500 419M879 419L874 372M888 419L893 372" />
              <path d="M876 418.500H891.500" stroke-width="2" />
              <circle cx="883.500" cy="425" r="6.500" /><path d="M876 425H891M883.500 418V432" />
              <path d="M883.500 433L878 466.500H889ZM883.500 433V520" />
              <path d="M877.500 466.500H889.500M878 469H889M878 474.500H889M877.500 477H889" /><path d="M877 472H890" stroke-width="2" />
              <path d="M878 477L880.500 516M889 477L886.500 516M881 477L883.500 510L886 477M880.500 478L878 516H889L886 478" />
              <circle cx="883" cy="519" r="5.500" /><path d="M877.500 519H889M883 512V525M878 525.500H889" />
              <path d="M862 525L878 517V526.500ZM862 525L878 523M903.500 525L888 517V526.500ZM903.500 525L888 523" />
              <circle cx="851" cy="527.500" r="11.500" /><path d="M839.500 526.500C845 523 857 523 862.500 526.500M839.500 527C845 532 857 532 862.500 527M851 516V539L847 618" />
              <circle cx="915" cy="527.500" r="11.500" /><path d="M903.500 526.500C909 523 921 523 926.500 526.500M903.500 527C909 532 921 532 926.500 527M915 516V539L918.500 618" />
              <path d="M838.500 538.500L848 537L862 539.500L850 541ZM839.500 540L847 618L861.500 540" />
              <path d="M903.500 540L914 537L927 539L915 541ZM904.500 540.500L918.500 618L926.500 540" />
              <circle cx="846.500" cy="636" r="13.500" /><path d="M833 635C840 631 853 631 860 635M833 636C840 640 853 640 860 636M847 618L845.500 648L841 738" />
              <circle cx="919" cy="636" r="13.500" /><path d="M905.500 635C912 631 926 631 932.500 635M905.500 636C912 640 926 640 932.500 636M918.500 618L919.500 650L923.500 740" />
              <path d="M832.500 647.500L846 645.500L858.500 649L845.500 652ZM832.500 648L840.500 738L858 650" />
              <path d="M906.500 649.500L919 646L932.500 648.500L920 652ZM906.500 650L923.500 740L932 649" />
              <circle cx="840" cy="756" r="4" /><path d="M840.500 738V752M835 756H846M840 750V762M836.500 760L839.500 784L844.500 760M840 757V784" />
              <circle cx="923.500" cy="757" r="4" /><path d="M923.500 740V752M918 757H929M923.500 751V763M919.500 760L923 784L927.500 760M923.500 757V786" />
              <ellipse cx="839.500" cy="789.500" rx="4.500" ry="3.500" /><path d="M835 789.500H844M839.500 784V794" />
              <ellipse cx="923.500" cy="791" rx="4.500" ry="3.500" /><path d="M919 791H928M923.500 786V796" />
            </g>
            <path d="M686.500 322V354M1084.500 322L1083.500 354M841 719V740M923.500 719V744" stroke="#1fe41f" fill="none" />
            <path d="M702 361H728M1092 361H1116M846 756.500H880M930 757.500H963" stroke="#e62a2a" fill="none" />
            <g class="gl"><text x="686" y="315">y</text><text x="1084" y="315">y</text><text x="839.500" y="712">y</text><text x="924" y="713">y</text></g>
            <g class="rl"><text x="734.500" y="366">x</text><text x="1132" y="366">x</text><text x="888.500" y="761.500">x</text><text x="971.500" y="763">x</text></g>
            <g class="bl"><text x="681" y="365">z</text><text x="1090" y="365">z</text><text x="838" y="773">z</text><text x="923.500" y="774">z</text></g>
          </svg>
          <svg class="axis" viewBox="0 0 24 32"><path d="M6.500 12V25" stroke="#2bd02b" /><path d="M7 26.500H20" stroke="#c81e1e" /><text x="3" y="9" fill="#2bd02b">y</text><text x="18" y="25" fill="#c81e1e">x</text><text x="2" y="30" fill="#0000c8">z</text></svg>
          <span class="hud cam">persp</span>
          <dl class="hud info"><dt>Symmetry:</dt><dd>Off</dd><dt>Soft Select:</dt><dd>On</dd></dl>
        </div>
      </section>

      <aside class="side">
        <div class="dock">
          <div class="tabs"><button class="cur">Display</button><button>Render</button><button>Anim</button></div>
          <div class="layers">
            <nav><a href="#">Layers</a><a href="#">Options</a><a href="#">Help</a></nav>
            <div class="lbtns">
              <button aria-label="Move layer up"><svg viewBox="0 0 20 20" v-html="icons.lUp"></svg></button>
              <button aria-label="Move layer down"><svg viewBox="0 0 20 20" v-html="icons.lDown"></svg></button>
              <button class="gap" aria-label="New layer"><svg viewBox="0 0 20 20" v-html="icons.lAdd"></svg></button>
              <button aria-label="New layer from selection"><svg viewBox="0 0 20 20" v-html="icons.lAddSel"></svg></button>
            </div>
            <div class="list">
              <div v-for="l in layers" :key="l.name" class="layer" :class="{ off: l.off, sel: l.sel }">
                <button aria-label="Visible">{{ l.v }}</button><button aria-label="Playback">{{ l.p }}</button><button aria-label="Type"></button>
                <i class="sw" :style="{ background: l.color }"></i><span>{{ l.name }}</span>
              </div>
            </div>
            <div class="hscroll"><svg viewBox="0 0 10 10"><path d="M7 1v8L2 5z" fill="#bdbdbd" /></svg><i><b></b></i><svg viewBox="0 0 10 10"><path d="M3 1v8l5-4z" fill="#bdbdbd" /></svg></div>
          </div>
        </div>
        <div class="vtabs"><button class="cur">Channel Box / Layer Editor</button><button>Attribute Editor</button></div>
      </aside>
    </main>

    <div class="time">
      <i class="grip"></i>
      <div class="track">
        <span></span><span v-for="f in frames" :key="f" class="tick">{{ f }}</span>
        <b class="now">1</b>
      </div>
      <input class="num cur" value="1" aria-label="Current frame" />
      <div class="play"><button v-for="n in playback" :key="n" class="cell" :aria-label="n"><svg viewBox="0 0 20 20" v-html="icons[n]"></svg></button></div>
    </div>

    <div class="range">
      <i class="grip"></i>
      <input class="num" value="1" aria-label="Animation start" />
      <input class="num" value="1" aria-label="Playback start" />
      <div class="slider"><div class="thumb"><i></i><span>1</span><span class="end">120</span><i></i></div></div>
      <input class="num" value="120" aria-label="Playback end" />
      <input class="num" value="200" aria-label="Animation end" />
      <svg class="dd" viewBox="0 0 12 12"><path d="M2 4h8L6 9z" fill="#555" stroke="#9a9a9a" /></svg>
      <button class="box">No Anim Layer</button>
      <svg class="dd second" viewBox="0 0 12 12"><path d="M2 4h8L6 9z" fill="#555" stroke="#9a9a9a" /></svg>
      <button class="box">No Character Set</button>
      <button class="ico" aria-label="Auto key"><svg viewBox="0 0 20 20" v-html="icons.autoKey"></svg></button>
      <button class="ico last" aria-label="Animation preferences"><svg viewBox="0 0 20 20" v-html="icons.prefs"></svg></button>
    </div>

    <div class="cmd">
      <i class="grip"></i>
      <label for="mel">MEL</label>
      <input id="mel" />
      <input class="out" readonly aria-label="Command result" />
      <button aria-label="Script editor"><svg viewBox="0 0 20 20"><path d="M0 0h20v20H0z" fill="#c4c4c4" /><path d="M0 4.500h20" stroke="#444" /><path d="M1.500 2h6" stroke="#444" stroke-dasharray="1 1" /><text x="9" y="15" font-size="11" font-weight="700" text-anchor="middle" fill="#333">{;}</text></svg></button>
    </div>

    <footer class="help"><i class="grip"></i><span>Select Tool: select an object</span></footer>

    <section class="outliner">
      <header>
        <svg class="logo" viewBox="0 0 16 16"><path d="M0 0h16v16H0z" fill="#bfeeee" /><path d="M1 15V6L8 1l7 5v9h-3l-4-4-4 4z" fill="#1fb5b5" /><path d="M4 12V5l4-4 4 4v7l-2-6-2 5-2-5z" fill="#0b6f72" /></svg>
        <span>Outliner</span>
        <button class="win" aria-label="Minimize outliner"><svg viewBox="0 0 12 12"><path d="M1 6.500h10" /></svg></button>
        <button class="win" aria-label="Maximize outliner"><svg viewBox="0 0 12 12"><path d="M1.500 1.500h9v9h-9z" /></svg></button>
        <button class="win" aria-label="Close outliner"><svg viewBox="0 0 12 12"><path d="M1 1l10 10M11 1L1 11" /></svg></button>
      </header>
      <nav><a href="#">Display</a><a href="#">Show</a><a href="#">Help</a></nav>
      <div class="filter">
        <svg viewBox="0 0 16 16"><path d="M3 1.500h10M3 14.500h10M2.500 4v8M13.500 4v8" fill="none" stroke="#777" stroke-width="1.200" stroke-dasharray="2 1.500" /><path d="M0 0h3l1.500 2L1 5H0zM16 0h-3l-1.500 2L15 5h1zM0 16h3l1.500-2L1 11H0zM16 16h-3l-1.500-2L15 11h1z" fill="#777" /></svg>
        <input aria-label="Filter" />
      </div>
      <div class="treewrap">
        <ul>
          <li v-for="(r, i) in rows" :key="i" :class="{ dim: r.dim }">
            <svg v-for="(g, k) in r.guides.split('')" :key="k" class="g" viewBox="0 0 20 20"><path :d="guidePath[g]" stroke="#bdbdbd" fill="none" /></svg>
            <svg class="g" viewBox="0 0 20 20">
              <g v-if="r.open" fill="none" stroke="#c4c4c4"><path d="M.5 3.500h13v13H.5z" stroke-width="1" /><path d="M3.500 10h7" stroke-width="2" /></g>
              <g v-else-if="r.guides" fill="none" stroke="#bdbdbd"><path d="M-2 10.500H3" /><circle cx="5.500" cy="10.500" r="2" /></g>
            </svg>
            <svg class="ri" viewBox="0 0 20 20" v-html="icons[r.icon]"></svg>
            <span>{{ r.name }}</span>
          </li>
        </ul>
        <div class="vscroll"><svg viewBox="0 0 10 10"><path d="M1 8h8L5 3z" fill="#bdbdbd" /></svg><i><b></b></i><svg viewBox="0 0 10 10"><path d="M1 2h8L5 7z" fill="#bdbdbd" /></svg></div>
      </div>
      <div class="hscroll"><svg viewBox="0 0 10 10"><path d="M7 1v8L2 5z" fill="#bdbdbd" /></svg><i><b></b></i><svg viewBox="0 0 10 10"><path d="M3 1v8l5-4z" fill="#bdbdbd" /></svg><em></em></div>
    </section>
  </div>
</template>

<style>
body { background: #444; overflow: hidden; }
</style>

<style scoped>
.app { position: relative; display: flex; flex-direction: column; height: 100vh; overflow: hidden; background: #444; color: #c4c4c4; font: 11px/16px "Noto Sans", "Open Sans", sans-serif; }
.app * { box-sizing: border-box; }
svg { display: block; flex: none; }
svg text { font-family: "Liberation Sans", sans-serif; }
button { flex: none; display: flex; align-items: center; justify-content: center; border: 0; padding: 0; background: none; color: inherit; font: inherit; }
input, select { border: 0; margin: 0; padding: 0 5px; color: #d0d0d0; background: #2b2b2b; font: inherit; border-radius: 2px; min-width: 0; }
a { color: inherit; text-decoration: none; white-space: pre; }
nav { display: flex; align-items: center; }

.titlebar { flex: none; display: flex; align-items: center; height: 23px; padding-left: 2px; background: #fff; color: #000; font: 12px/18px Lato, sans-serif; }
.logo { width: 16px; height: 16px; margin-right: 6px; }
.caption { flex: 1; white-space: nowrap; overflow: hidden; }
.win { width: 46px; height: 20px; }
.win svg { width: 12px; height: 12px; fill: none; stroke: #111; }
.titlebar .win:last-child { width: 46px; margin-right: -8px; }

.menubar { flex: none; height: 20px; padding-left: 9px; gap: 15px; }

.grip { flex: none; width: 4px; align-self: stretch; margin: 3px 7px; background-image: radial-gradient(circle at 1px 1px, #777 0 1px, transparent 1px); background-size: 3px 3px; }
.status { flex: none; display: flex; align-items: center; height: 29px; padding-bottom: 6px; }
.status .grip { margin-top: 0; margin-bottom: 0; }
.combo { position: relative; flex: none; display: flex; }
.combo select { appearance: none; width: 100%; height: 100%; background: #5d5d5d; padding-left: 3px; color: #e0e0e0; }
.combo svg { position: absolute; right: 0; top: 0; width: 19px; height: 100%; border-left: 1px solid #4a4a4a; pointer-events: none; }
.menuset { width: 98px; height: 20px; }
.cell { width: 23px; height: 22px; }
.cell.slim { width: 22px; }
.cell svg { width: 20px; height: 20px; }
.on { background: #5285a6; border-radius: 2px; }
.live { width: 98px; height: 22px; margin: 0 -1px 0 1px; padding: 0 5px; background: #3f3f3f; border: 1px solid #505050; }
.right { margin-left: auto; margin-right: -7px; display: flex; }

.shelfrow { flex: none; display: flex; height: 45px; border-top: 1px solid #2b2b2b; }
.shelfside { flex: none; width: 20px; background: #2f2f2f; display: flex; flex-direction: column; justify-content: space-around; align-items: center; margin-right: 3px; }
.shelfside svg { width: 12px; height: 12px; }
.shelf { flex: 1; display: flex; align-items: center; padding-left: 3px; border: 1px solid #2b2b2b; border-width: 1px 0 1px 1px; }
.group { display: flex; align-items: center; }
.group + .group::before { content: ""; width: 2px; height: 34px; background: #8f8f8f; margin: 0 5px; }
.group button { width: 35px; height: 36px; }
.group svg { width: 30px; height: 30px; }
.group .wide svg { width: 34px; height: 34px; }
.shelfscroll { width: 12px; height: 34px; margin-left: auto; margin-right: -2px; }

.main { flex: 1; min-height: 0; display: flex; border-bottom: 2px solid #2b2b2b; padding-top: 2px; }
.toolbox { flex: none; width: 43px; padding: 7px 1px 0 4px; display: flex; flex-direction: column; align-items: center; border-right: 2px solid #2f2f2f; border-top: 1px solid #303030; margin-right: 2px; }
.hgrip { flex: none; width: 29px; height: 5px; margin-bottom: 4px; background-image: radial-gradient(circle at 1px 1px, #777 0 1px, transparent 1px); background-size: 3px 3px; }
.tool { width: 36px; height: 36px; margin-bottom: 1px; }
.tool svg { width: 36px; height: 36px; }
.toolbox hr { width: 36px; height: 2px; margin: 41px 0 9px; border: 0; background: #8f8f8f; flex: none; }
.lay { margin-bottom: 9px; }
.lay svg { width: 28px; height: 28px; }
.more { margin-top: -3px; }
.more svg { width: 30px; height: 30px; }
.maya { width: 32px; height: 30px; margin: auto 0 4px; }

.panel { flex: 1; min-width: 0; display: flex; flex-direction: column; border: 1px solid #8a8a8a; border-bottom: 0; border-right-color: #777; margin-top: 1px; }
.panelmenu { flex: none; height: 19px; padding-left: 8px; gap: 16px; }
.paneltools { flex: none; height: 21px; display: flex; align-items: center; padding-bottom: 1px; margin-left: -1px; }
.paneltools button { width: 20px; height: 19px; }
.paneltools button svg { width: 19px; height: 19px; }
.paneltools .b22 { width: 22px; }
.sep { flex: none; width: 11px; height: 15px; background: linear-gradient(#7d7d7d, #7d7d7d) center / 2px 100% no-repeat; }
.paneltools input { width: 38px; height: 16px; margin: 0 1px; background: #2d2d2d; }
.space { width: 138px; height: 17px; margin-left: 4px; }
.canvas { position: relative; flex: 1; min-height: 0; background: linear-gradient(#303841, #4c545b 25%, #626d71 55%, #7b898b); overflow: hidden; }
.scene { width: 100%; height: 100%; shape-rendering: crispEdges; }
.bones { fill: none; stroke: #000062; stroke-width: 1; }
.red { fill: #a0303a; fill-opacity: .6; stroke: #8c2030; }
.gl text, .rl text { font-family: "Liberation Mono", monospace; font-size: 17px; text-anchor: middle; }
.gl { fill: #1fe41f; }
.rl { fill: #e62a2a; }
.bl text { font-size: 13px; font-weight: 700; text-anchor: middle; fill: #1414ff; }
.axis { position: absolute; left: 20px; bottom: 22px; width: 24px; height: 32px; font-size: 10px; font-weight: 700; }
.hud { position: absolute; margin: 0; color: #fff; font: 700 10px/20px "Liberation Sans", sans-serif; }
.cam { left: 758px; bottom: 4px; }
.info { right: 16px; bottom: 4px; display: grid; grid-template-columns: 114px auto; }
.info dd { margin: 0; }

.side { flex: none; width: 304px; display: flex; padding-left: 7px; gap: 2px; border-left: 2px solid #303030; }
.dock { flex: none; width: 282px; display: flex; flex-direction: column; justify-content: flex-end; padding-bottom: 2px; }
.tabs { display: flex; gap: 1px; }
.tabs button { height: 20px; padding: 0 11px; background: #393939; color: #999; }
.tabs .cur { background: #666; color: #dcdcdc; padding: 0 12px; }
.layers { border: 1px solid #2b2b2b; padding: 0 4px 3px 3px; }
.layers nav { height: 22px; gap: 14px; padding-left: 7px; }
.lbtns { display: flex; justify-content: flex-end; padding-right: 3px; height: 20px; gap: 4px; align-items: center; margin-bottom: 5px; }
.lbtns svg { width: 19px; height: 19px; }
.lbtns .gap { margin-left: 4px; }
.list { height: 132px; background: #2b2b2b; padding-top: 1px; overflow: hidden; }
.layer { display: flex; align-items: center; height: 20px; padding-left: 4px; gap: 3px; color: #f0f0f0; white-space: nowrap; }
.layer button { width: 20px; height: 14px; border: 1px solid #1e1e1e; border-radius: 2px; }
.layer.off button { color: #151515; }
.layer.sel { background: #5285a6; color: #111; }
.layer.sel button { border-color: #3d6580; }
.sw { flex: none; width: 16px; height: 14px; }
.hscroll { display: flex; align-items: center; height: 12px; background: #383838; }
.hscroll svg, .vscroll svg { width: 10px; height: 10px; }
.hscroll i { flex: 1; height: 10px; margin: 0 2px; }
.hscroll b { display: block; width: 76%; height: 100%; background: #5d5d5d; border-radius: 4px; }
.vtabs { flex: none; width: 20px; display: flex; flex-direction: column; gap: 3px; }
.vtabs button { writing-mode: vertical-rl; width: 20px; height: 101px; background: #393939; color: #999; white-space: nowrap; }
.vtabs .cur { height: 157px; background: #666; color: #dcdcdc; }

.time, .range, .cmd { flex: none; display: flex; align-items: center; }
.time { height: 33px; }
.track { position: relative; flex: 1; min-width: 0; height: 28px; display: grid; grid-template-columns: 63fr repeat(23, 67fr) 20fr; background: #2b2b2b; color: #777; line-height: 10px; margin-left: -2px; }
.tick { min-width: 0; padding-left: 2px; background: linear-gradient(#808080, #808080) 0 100% / 2px 15px no-repeat; }
.now { position: absolute; left: 10px; top: 0; width: 12px; height: 28px; padding: 14px 0 0 2px; background: #545454; color: #fff; font-weight: 400; }
.num { flex: none; width: 68px; height: 23px; }
.num.cur { height: 18px; margin: 0 7px; }
.play { display: flex; }
.range { height: 34px; }
.range .num + .num { margin-left: 8px; }
.slider { flex: 1; min-width: 0; height: 23px; margin: 0 7px; background: #383838; display: flex; align-items: center; padding: 0 7px; }
.thumb { flex: none; width: 61%; height: 19px; display: flex; align-items: center; gap: 4px; padding: 0 4px; background: #5d5d5d; border-radius: 3px; }
.thumb i { width: 13px; height: 13px; background: #909090; border-radius: 2px; }
.thumb .end { margin-left: auto; }
.dd { width: 12px; height: 12px; margin: 0 6px 0 4px; }
.dd.second { margin-left: 9px; }
.box { width: 102px; height: 24px; border: 1px solid #505050; border-radius: 2px; justify-content: flex-start; padding-left: 5px; background: #414141; white-space: nowrap; }
.ico { width: 20px; height: 20px; margin-left: 7px; }
.ico svg { width: 20px; height: 20px; }
.ico.last { margin: 0 0 0 10px; }
.cmd { height: 33px; border-bottom: 1px solid #2b2b2b; }
.cmd label { width: 45px; padding-left: 10px; color: #e6e6e6; }
.cmd input { flex: 618 1 0; height: 23px; margin-right: 7px; padding: 0; }
.cmd .out { flex-grow: 1199; height: 25px; margin-right: 6px; border-radius: 0; }
.cmd svg { width: 20px; height: 20px; }
.cmd button { width: 17px; justify-content: flex-start; overflow: hidden; }
.help { flex: none; height: 18px; display: flex; align-items: center; overflow: hidden; }
.help span { padding: 8px 0 0 10px; font: 10px/12px Roboto, sans-serif; }

.outliner { position: absolute; top: 115px; right: 16px; width: 287px; background: #444; border-bottom: 1px solid #505050; box-shadow: 0 0 4px rgba(0, 0, 0, .5); padding-bottom: 10px; }
.outliner header { display: flex; align-items: center; height: 30px; padding-left: 8px; background: #fff; color: #8a8a8a; font: 12px/18px Roboto, sans-serif; }
.outliner header .logo { margin-right: 5px; }
.outliner header span { flex: 1; }
.outliner .win svg { stroke: #777; }
.outliner nav { height: 22px; padding-left: 10px; gap: 15px; }
.filter { display: flex; align-items: center; padding: 1px 3px 8px 8px; }
.filter svg { width: 15px; height: 16px; margin: 2px 6px -4px 0; }
.filter input { flex: 1; height: 18px; }
.treewrap { display: flex; margin: 0 3px; height: 481px; background: #2b2b2b; }
ul { flex: 1; min-width: 0; list-style: none; margin: 0; padding: 0 0 0 19px; overflow: hidden; }
li { display: flex; height: 20px; align-items: center; white-space: nowrap; }
li.dim span { color: #6a6a6a; }
.g { width: 20px; height: 20px; overflow: visible; }
.ri { width: 18px; height: 18px; margin: 0 3px; overflow: visible; }
.vscroll { flex: none; width: 11px; background: #383838; display: flex; flex-direction: column; align-items: center; padding: 2px 0; }
.vscroll i { flex: 1; width: 10px; }
.vscroll b { display: block; height: 51%; background: #5d5d5d; border-radius: 4px; }
.outliner .hscroll { margin: 1px 3px 0; }
.outliner .hscroll b { width: 70%; }
.outliner .hscroll em { flex: none; width: 14px; height: 12px; background: #2b2b2b; }
</style>
